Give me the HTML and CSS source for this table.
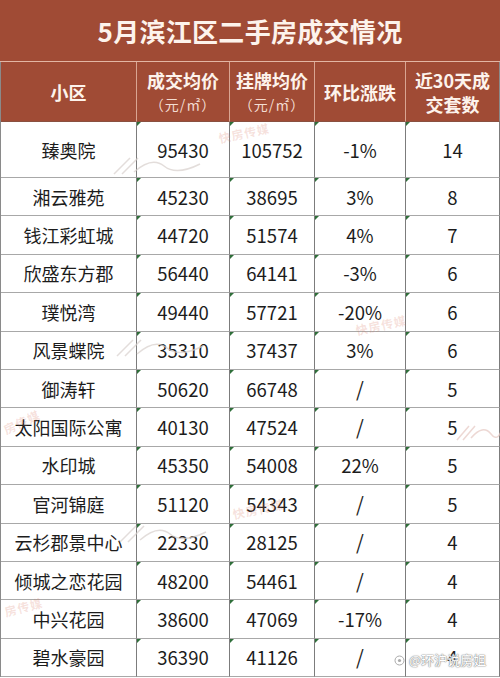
FILE: index.html
```html
<!DOCTYPE html>
<html lang="zh-CN">
<head>
<meta charset="utf-8">
<title>5月滨江区二手房成交情况</title>
<link rel="stylesheet" href="styles.css">
</head>
<body>
<div class="sheet">
  <div class="title">5月滨江区二手房成交情况</div>
  <div class="grid">
    <div class="hd">小区</div>
    <div class="hd two"><span>成交均价</span><span class="unit">（元/㎡）</span></div>
    <div class="hd two"><span>挂牌均价</span><span class="unit">（元/㎡）</span></div>
    <div class="hd">环比涨跌</div>
    <div class="hd two last"><span>近30天成</span><span>交套数</span></div>

    <div class="c n">臻奥院</div><div class="c t">95430</div><div class="c t">105752</div><div class="c t">-1%</div><div class="c t e">14</div>
    <div class="c n">湘云雅苑</div><div class="c t">45230</div><div class="c t">38695</div><div class="c t">3%</div><div class="c t e">8</div>
    <div class="c n">钱江彩虹城</div><div class="c t">44720</div><div class="c t">51574</div><div class="c t">4%</div><div class="c t e">7</div>
    <div class="c n">欣盛东方郡</div><div class="c t">56440</div><div class="c t">64141</div><div class="c t">-3%</div><div class="c t e">6</div>
    <div class="c n">璞悦湾</div><div class="c t">49440</div><div class="c t">57721</div><div class="c t">-20%</div><div class="c t e">6</div>
    <div class="c n">风景蝶院</div><div class="c t">35310</div><div class="c t">37437</div><div class="c t">3%</div><div class="c t e">6</div>
    <div class="c n">御涛轩</div><div class="c t">50620</div><div class="c t">66748</div><div class="c t sl">/</div><div class="c t e">5</div>
    <div class="c n">太阳国际公寓</div><div class="c t">40130</div><div class="c t">47524</div><div class="c t sl">/</div><div class="c t e">5</div>
    <div class="c n">水印城</div><div class="c t">45350</div><div class="c t">54008</div><div class="c t">22%</div><div class="c t e">5</div>
    <div class="c n">官河锦庭</div><div class="c t">51120</div><div class="c t">54343</div><div class="c t sl">/</div><div class="c t e">5</div>
    <div class="c n">云杉郡景中心</div><div class="c t">22330</div><div class="c t">28125</div><div class="c t sl">/</div><div class="c t e">4</div>
    <div class="c n">倾城之恋花园</div><div class="c t">48200</div><div class="c t">54461</div><div class="c t sl">/</div><div class="c t e">4</div>
    <div class="c n">中兴花园</div><div class="c t">38600</div><div class="c t">47069</div><div class="c t">-17%</div><div class="c t e">4</div>
    <div class="c n">碧水豪园</div><div class="c t">36390</div><div class="c t">41126</div><div class="c t sl">/</div><div class="c t e">4</div>
  </div>

  <span class="wm w1">快房传媒</span>
  <span class="wm w2">快房传媒</span>
  <span class="wm w3">快房传媒</span>
  <span class="wm w4">房传媒</span>
  <span class="wm w5">房传媒</span>
  <svg class="swoosh s1" width="90" height="24" viewBox="0 0 90 24"><path d="M2 22 L18 6 M10 22 L26 6 M22 20 Q40 4 52 14 T88 12" fill="none" stroke="#d8d0cc" stroke-width="1.5"/></svg>
  <svg class="swoosh s2" width="90" height="24" viewBox="0 0 90 24"><path d="M2 22 L18 6 M10 22 L26 6 M22 20 Q40 4 52 14 T88 12" fill="none" stroke="#d8d0cc" stroke-width="1.5"/></svg>
  <svg class="swoosh s3" width="90" height="24" viewBox="0 0 90 24"><path d="M2 22 L18 6 M10 22 L26 6 M22 20 Q40 4 52 14 T88 12" fill="none" stroke="#d8d0cc" stroke-width="1.5"/></svg>
  <svg class="swoosh s4" width="50" height="24" viewBox="0 0 50 24"><path d="M2 22 L14 8 M8 22 L20 8 M16 20 Q28 6 36 16 T48 6" fill="none" stroke="#e6c8c2" stroke-width="1.5"/></svg>

  <div class="credit"><svg width="11" height="11" viewBox="0 0 11 11"><circle cx="5.5" cy="5.5" r="4.5" fill="#fff" stroke="#aaa"/><circle cx="5.5" cy="5.5" r="1.6" fill="#aaa"/></svg><span>@环沪说房姐</span></div>
</div>
</body>
</html>
```

FILE: styles.css
```css
html, body {
  margin: 0;
  padding: 0;
  background: #ffffff;
}

body {
  font-family: "Noto Sans CJK SC", "Liberation Sans", sans-serif;
  color: #1c1c1c;
}

.sheet {
  position: relative;
  width: 500px;
  height: 678px;
  overflow: hidden;
}

.title {
  height: 61px;
  background: #a04b35;
  border-bottom: 1px solid #e3b6a4;
  color: #fdf3ec;
  font-size: 26px;
  font-weight: 700;
  line-height: 62px;
  text-align: center;
  letter-spacing: 0.3px;
}

.grid {
  display: grid;
  grid-template-columns: 136px 93px 85px 91px 94px;
  grid-template-rows: 60px 56px repeat(13, 38.4px);
  border-left: 1px solid #8a8a8a;
  width: 499px;
}

.hd {
  background: #a04b35;
  color: #fdf3ec;
  font-size: 18px;
  font-weight: 700;
  display: flex;
  flex-direction: column;
  align-items: center;
  justify-content: center;
  line-height: 24px;
  border-right: 1px solid #d9a592;
  border-bottom: 1px solid #8a5040;
}

.hd.last {
  border-right: 1px solid #8a8a8a;
}

.unit {
  font-size: 14px;
  font-weight: 400;
  color: #f3ddd2;
  letter-spacing: 1px;
}

.c {
  position: relative;
  display: flex;
  align-items: center;
  justify-content: center;
  font-size: 18px;
  line-height: 22px;
  border-right: 1px solid #7c7c7c;
  border-bottom: 1px solid #a8a8a8;
  background: #ffffff;
}

.n {
  font-size: 18px;
}

.t {
  font-family: "Noto Sans CJK SC", "Liberation Sans", sans-serif;
  font-size: 18.5px;
}

.sl {
  font-size: 20px;
}

.t::before {
  content: "";
  position: absolute;
  left: 0;
  top: 0;
  width: 0;
  height: 0;
  border-top: 4px solid #2f6f3a;
  border-right: 4px solid transparent;
}

.wm {
  position: absolute;
  font-size: 12px;
  font-weight: 700;
  color: rgba(215, 120, 95, 0.22);
  transform: rotate(-12deg);
  letter-spacing: 1px;
  pointer-events: none;
}

.w1 { left: 218px; top: 124px; }
.w2 { left: 355px; top: 316px; }
.w3 { left: 232px; top: 500px; }
.w4 { left: 2px; top: 413px; transform: rotate(-25deg); }
.w5 { left: 4px; top: 598px; transform: rotate(-15deg); }

.swoosh {
  position: absolute;
  opacity: 0.7;
}

.s1 { left: 112px; top: 152px; }
.s2 { left: 115px; top: 334px; }
.s3 { left: 118px; top: 520px; }
.s4 { left: 455px; top: 418px; }

.credit {
  position: absolute;
  left: 394px;
  top: 652px;
  display: flex;
  align-items: center;
  gap: 4px;
  font-size: 13px;
  line-height: 16px;
  color: #ffffff;
  text-shadow: 0 0 1px #888, 0 0 1px #888, 0 0 2px #aaa;
}
```
